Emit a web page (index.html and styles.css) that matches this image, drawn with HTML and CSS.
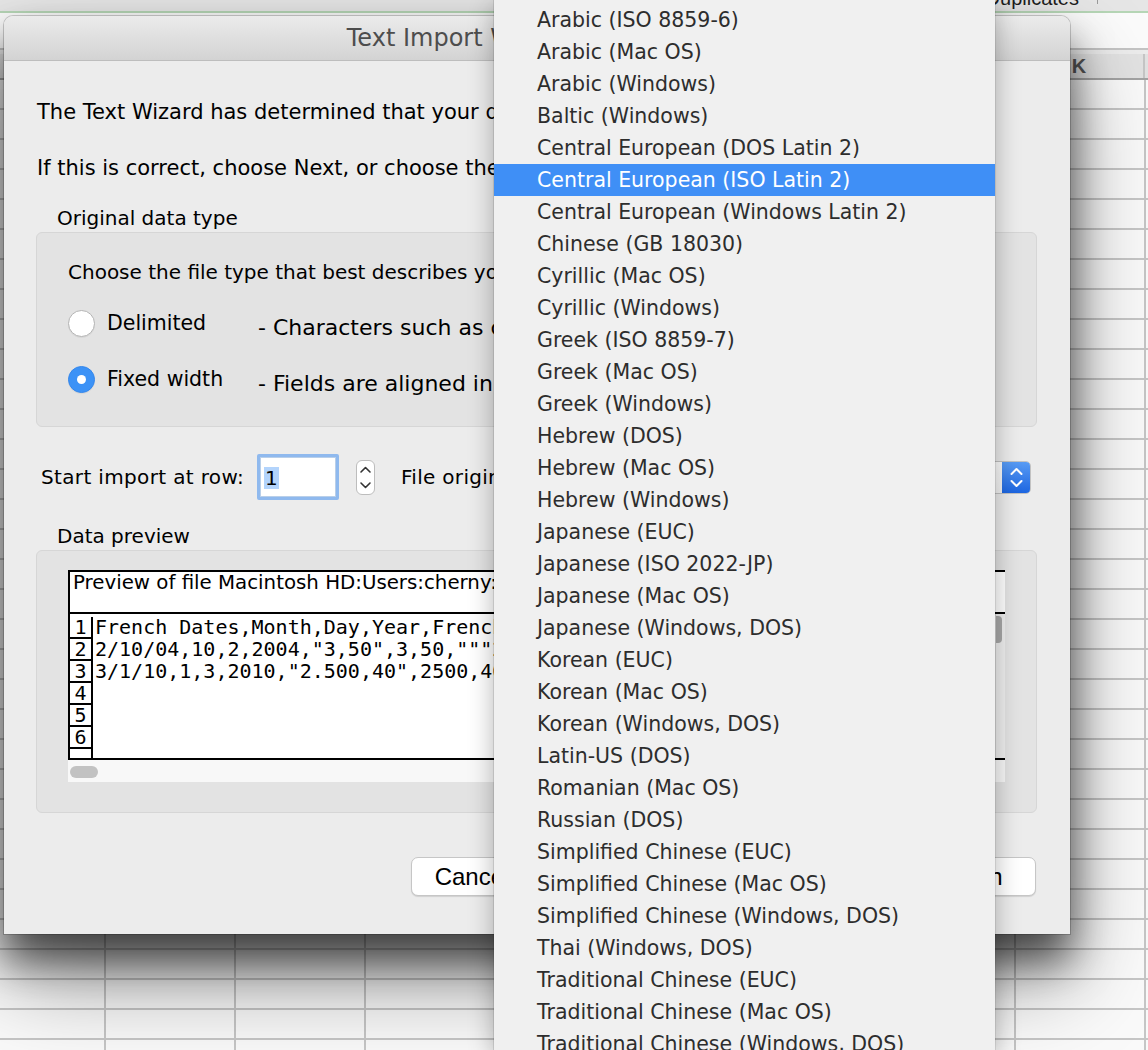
FILE: index.html
```html
<!DOCTYPE html>
<html>
<head>
<meta charset="utf-8">
<title>Text Import Wizard</title>
<link rel="stylesheet" href="styles.css">
</head>
<body>
<div class="sheet">
  <div class="toolbar"><span class="tb-text">Remove Duplicates</span><span class="tb-sep"></span></div>
  <div class="greenline"></div>
  <div class="formula"></div>
  <div class="colheads">
    <div class="colhead">C</div><div class="colhead">D</div><div class="colhead">E</div><div class="colhead">F</div><div class="colhead">G</div><div class="colhead">H</div><div class="colhead">I</div><div class="colhead">J</div><div class="colhead">K</div><div class="colhead">L</div>
  </div>
  <div class="grid"></div>
</div>

<div class="dialog">
  <div class="titlebar">Text Import Wizard - Step 1 of 3</div>
  <div class="dbody">
    <p class="intro1">The Text Wizard has determined that your data is Fixed Width.</p>
    <p class="intro2">If this is correct, choose Next, or choose the Data Type that best describes your data.</p>
    <div class="section-label">Original data type</div>
    <div class="group group-type">
      <div class="choose">Choose the file type that best describes your data:</div>
      <div class="radio-row first">
        <span class="radio"></span>
        <span class="radio-label">Delimited</span>
        <span class="radio-desc">- Characters such as commas or tabs separate each field.</span>
      </div>
      <div class="radio-row second">
        <span class="radio on"></span>
        <span class="radio-label">Fixed width</span>
        <span class="radio-desc">- Fields are aligned in columns with spaces between each field.</span>
      </div>
    </div>
    <div class="start-row">
      <span class="start-label">Start import at row:</span>
      <span class="num-field"><span class="num-sel">1</span></span>
      <span class="stepper">
        <svg width="19" height="35" viewBox="0 0 19 35"><path d="M5 12 L9.5 7.5 L14 12" fill="none" stroke="#333" stroke-width="1.6" stroke-linecap="round" stroke-linejoin="round"/><path d="M5 23 L9.5 27.5 L14 23" fill="none" stroke="#333" stroke-width="1.6" stroke-linecap="round" stroke-linejoin="round"/></svg>
      </span>
      <span class="origin-label">File origin:</span>
      <span class="popup">
        <span class="popup-text">Central European (ISO Latin 2)</span>
        <span class="popup-cap">
          <svg width="29" height="33" viewBox="0 0 29 33"><path d="M9.5 13 L14.5 8 L19.5 13" fill="none" stroke="#fff" stroke-width="2" stroke-linecap="round" stroke-linejoin="round"/><path d="M9.5 20 L14.5 25 L19.5 20" fill="none" stroke="#fff" stroke-width="2" stroke-linecap="round" stroke-linejoin="round"/></svg>
        </span>
      </span>
    </div>
    <div class="section-label preview-label">Data preview</div>
    <div class="group group-preview">
      <div class="preview">
        <div class="pv-main">
          <div class="pv-head">Preview of file Macintosh HD:Users:cherny:Desktop:French Dates.csv.</div>
          <div class="pv-body">
            <div class="pv-rows">
              <div class="pv-row"><span class="pv-num">1</span><span class="pv-text">French Dates,Month,Day,Year,French Numbers,Number,Text,Currency</span></div>
              <div class="pv-row"><span class="pv-num">2</span><span class="pv-text">2/10/04,10,2,2004,"3,50",3,50,"""2004""",€3,50</span></div>
              <div class="pv-row"><span class="pv-num">3</span><span class="pv-text">3/1/10,1,3,2010,"2.500,40",2500,40,"""2010""",€2.500,40</span></div>
              <div class="pv-row"><span class="pv-num">4</span><span class="pv-text"></span></div>
              <div class="pv-row"><span class="pv-num">5</span><span class="pv-text"></span></div>
              <div class="pv-row"><span class="pv-num">6</span><span class="pv-text"></span></div>
              <div class="pv-row"><span class="pv-num"></span><span class="pv-text"></span></div>
            </div>
            <div class="pv-vscroll"><span class="pv-vthumb"></span></div>
          </div>
        </div>
        <div class="pv-hscroll"><span class="pv-hthumb"></span></div>
      </div>
    </div>
    <div class="buttons">
      <button class="btn btn-cancel">Cancel</button>
      <button class="btn btn-mid">&lt; Back</button>
      <button class="btn btn-mid">Next &gt;</button>
      <button class="btn btn-finish">Finish</button>
    </div>
  </div>
</div>

<div class="menu">
  <div class="menu-item">Arabic (ISO 8859-6)</div>
  <div class="menu-item">Arabic (Mac OS)</div>
  <div class="menu-item">Arabic (Windows)</div>
  <div class="menu-item">Baltic (Windows)</div>
  <div class="menu-item">Central European (DOS Latin 2)</div>
  <div class="menu-item selected">Central European (ISO Latin 2)</div>
  <div class="menu-item">Central European (Windows Latin 2)</div>
  <div class="menu-item">Chinese (GB 18030)</div>
  <div class="menu-item">Cyrillic (Mac OS)</div>
  <div class="menu-item">Cyrillic (Windows)</div>
  <div class="menu-item">Greek (ISO 8859-7)</div>
  <div class="menu-item">Greek (Mac OS)</div>
  <div class="menu-item">Greek (Windows)</div>
  <div class="menu-item">Hebrew (DOS)</div>
  <div class="menu-item">Hebrew (Mac OS)</div>
  <div class="menu-item">Hebrew (Windows)</div>
  <div class="menu-item">Japanese (EUC)</div>
  <div class="menu-item">Japanese (ISO 2022-JP)</div>
  <div class="menu-item">Japanese (Mac OS)</div>
  <div class="menu-item">Japanese (Windows, DOS)</div>
  <div class="menu-item">Korean (EUC)</div>
  <div class="menu-item">Korean (Mac OS)</div>
  <div class="menu-item">Korean (Windows, DOS)</div>
  <div class="menu-item">Latin-US (DOS)</div>
  <div class="menu-item">Romanian (Mac OS)</div>
  <div class="menu-item">Russian (DOS)</div>
  <div class="menu-item">Simplified Chinese (EUC)</div>
  <div class="menu-item">Simplified Chinese (Mac OS)</div>
  <div class="menu-item">Simplified Chinese (Windows, DOS)</div>
  <div class="menu-item">Thai (Windows, DOS)</div>
  <div class="menu-item">Traditional Chinese (EUC)</div>
  <div class="menu-item">Traditional Chinese (Mac OS)</div>
  <div class="menu-item">Traditional Chinese (Windows, DOS)</div>
</div>
</body>
</html>
```

FILE: styles.css
```css
html, body {
  margin: 0;
  padding: 0;
}
body {
  width: 1148px;
  height: 1050px;
  overflow: hidden;
  position: relative;
  background: #fff;
  font-family: "DejaVu Sans", sans-serif;
}

/* ---------- spreadsheet background ---------- */
.sheet {
  display: flex;
  flex-direction: column;
  height: 1050px;
  overflow: hidden;
}
.toolbar {
  height: 11px;
  background: #e6e6e6;
  display: flex;
  justify-content: flex-end;
  align-items: flex-start;
  overflow: hidden;
}
.tb-text {
  font: 20px/24px "Liberation Sans", Arial, sans-serif;
  color: #1e1e1e;
  margin-top: -14px;
}
.tb-sep {
  width: 1px;
  height: 4px;
  background: #9a9a9a;
  margin-left: 18px;
  margin-right: 50px;
}
.greenline {
  height: 2px;
  background: #b6d6b6;
}
.formula {
  height: 35px;
  background: #fbfbfb;
}
.colheads {
  height: 32px;
  box-sizing: border-box;
  border-top: 2px solid #c4c4c4;
  border-bottom: 2px solid #a3a3a3;
  padding-top: 4px;
  background: linear-gradient(#ececec 0, #ececec 4px, #e2e2e2 4px);
  display: flex;
  margin-left: -25px;
}
.colhead {
  flex: 0 0 130px;
  box-sizing: border-box;
  border-right: 2px solid #c6c6c6;
  text-align: center;
  font: bold 20px/24px "Liberation Sans", Arial, sans-serif;
  color: #555;
}
.grid {
  flex: 1;
  background-color: #fafafa;
  background-image:
    linear-gradient(to right, #c6c6c6 0, #c6c6c6 2px, transparent 2px),
    linear-gradient(to bottom, transparent 28px, #c6c6c6 28px, #c6c6c6 30px);
  background-size: 130px 30px, 130px 30px;
  background-position: 104px 0, 0 0;
}

/* ---------- dialog ---------- */
.dialog {
  position: absolute;
  left: 4px;
  top: 16px;
  width: 1066px;
  height: 918px;
  background: #ececec;
  border-radius: 9px 9px 0 0;
  box-shadow: 0 26px 40px rgba(0, 0, 0, 0.6), 0 46px 90px rgba(0, 0, 0, 0.4), 0 0 0 1px rgba(0, 0, 0, 0.18);
  display: flex;
  flex-direction: column;
}
.titlebar {
  height: 44px;
  flex: none;
  border-bottom: 1px solid #bdbdbd;
  border-radius: 9px 9px 0 0;
  background: linear-gradient(#ebebeb, #d3d3d3);
  display: flex;
  align-items: center;
  justify-content: center;
  font: 24px "DejaVu Sans", sans-serif;
  color: #4d4d4d;
}
.dbody {
  padding: 0 33px 0 32px;
  display: flex;
  flex-direction: column;
  font: 20px/24px "DejaVu Sans", sans-serif;
  color: #000;
}
.dbody p {
  margin: 0;
  white-space: nowrap;
  font-size: 21px;
}
.intro1 { margin: 39px 0 0 1px !important; }
.intro2 { margin: 32px 0 0 1px !important; }
.section-label {
  margin: 26px 0 0 21px;
}
.preview-label {
  margin-top: 24px;
}
.group {
  margin-top: 2px;
  background: #e3e3e3;
  border: 1px solid #d6d6d6;
  border-radius: 6px;
  box-sizing: border-box;
}
.group-type {
  height: 195px;
  padding: 27px 31px 0;
}
.choose {
  white-space: nowrap;
}
.radio-row {
  display: flex;
  align-items: flex-start;
  height: 28px;
  white-space: nowrap;
}
.radio-row.first { margin-top: 26px; }
.radio-row.second { margin-top: 28px; }
.radio {
  flex: 0 0 27px;
  height: 27px;
  box-sizing: border-box;
  border-radius: 50%;
  background: #fff;
  border: 1px solid #b4b4b4;
  box-shadow: 0 1px 0 rgba(0, 0, 0, 0.05);
}
.radio.on {
  background: #3c92f6;
  border-color: #3487ec;
  display: flex;
  align-items: center;
  justify-content: center;
}
.radio.on::after {
  content: "";
  width: 9px;
  height: 9px;
  border-radius: 50%;
  background: #fff;
}
.radio-label {
  margin-left: 12px;
  flex: 0 0 151px;
  line-height: 26px;
  font-size: 20.5px;
}
.radio-desc {
  padding-top: 4px;
  line-height: 27px;
  font-size: 22px;
}

/* start import row */
.start-row {
  margin-top: 27px;
  height: 46px;
  display: flex;
  align-items: center;
  white-space: nowrap;
}
.start-label {
  margin-left: 5px;
  flex: 0 0 216px;
  letter-spacing: 0.35px;
}
.num-field {
  flex: 0 0 82px;
  height: 46px;
  box-sizing: border-box;
  border: 3px solid #8fb9ee;
  border-radius: 2px;
  background: #fff;
  box-shadow: inset 0 0 0 1px #b9cfe9;
  padding: 9px 0 0 4px;
}
.num-sel {
  display: inline-block;
  background: #b3d4fc;
  line-height: 22px;
  height: 22px;
  padding: 0 1px;
}
.stepper {
  margin-left: 17px;
  flex: 0 0 19px;
  height: 35px;
  box-sizing: border-box;
  border: 1px solid #bdbdbd;
  border-radius: 6px;
  background: #fff;
  display: flex;
  align-items: center;
  justify-content: center;
  overflow: hidden;
}
.stepper svg { display: block; flex: none; }
.origin-label {
  margin-left: 26px;
  letter-spacing: 0.3px;
}
.popup {
  flex: 1;
  margin-left: 12px;
  margin-right: 6px;
  height: 33px;
  box-sizing: border-box;
  border: 1px solid #c2c2c2;
  border-radius: 5px;
  background: linear-gradient(#fdfdfd, #f3f3f3);
  display: flex;
  overflow: hidden;
}
.popup-text {
  flex: 1;
  padding-left: 10px;
  font: 18px/31px "DejaVu Sans", sans-serif;
  color: #000;
}
.popup-cap {
  flex: 0 0 29px;
  margin: -1px -1px -1px 0;
  border-radius: 0 5px 5px 0;
  background: linear-gradient(#5a9df5, #1b64e0);
  display: flex;
  align-items: center;
}
.popup-cap svg { display: block; }

/* data preview */
.group-preview {
  height: 263px;
  padding: 19px 31px 0;
}
.preview {
  height: 212px;
  background: #fff;
  display: flex;
  flex-direction: column;
}
.pv-main {
  height: 190px;
  flex: none;
  box-sizing: border-box;
  border-top: 2px solid #000;
  border-left: 2px solid #000;
  border-bottom: 2px solid #000;
  display: flex;
  flex-direction: column;
  overflow: hidden;
}
.pv-head {
  height: 42px;
  flex: none;
  box-sizing: border-box;
  border-bottom: 2px solid #000;
  padding-left: 3px;
  font: 19.8px/22px "DejaVu Sans", sans-serif;
  white-space: nowrap;
  overflow: hidden;
}
.pv-body {
  flex: 1;
  display: flex;
  overflow: hidden;
}
.pv-rows {
  flex: 1;
  padding-top: 3px;
  overflow: hidden;
}
.pv-row {
  display: flex;
  height: 22px;
}
.pv-num {
  flex: 0 0 21px;
  height: 20px;
  border-right: 2px solid #000;
  border-bottom: 2px solid #000;
  text-align: center;
  font: 20px/20px "DejaVu Sans Mono", monospace;
}
.pv-text {
  padding-left: 2px;
  font: 20px/20px "DejaVu Sans Mono", monospace;
  white-space: pre;
}
.pv-vscroll {
  flex: 0 0 9px;
  background: #efefef;
  border-left: 1px solid #e0e0e0;
  padding-top: 2px;
}
.pv-vthumb {
  display: block;
  width: 6px;
  height: 27px;
  border-radius: 0 4px 4px 0;
  background: #a8a8a8;
}
.pv-hscroll {
  flex: 1;
  background: #f8f8f8;
  padding: 6px 0 0 2px;
}
.pv-hthumb {
  display: block;
  width: 28px;
  height: 12px;
  border-radius: 6px;
  background: #c2c2c2;
}

/* buttons */
.buttons {
  margin-top: 44px;
  margin-right: 1px;
  height: 39px;
  display: flex;
  justify-content: flex-end;
}
.btn {
  height: 39px;
  box-sizing: border-box;
  border: 1px solid #c6c6c6;
  border-radius: 7px;
  background: #fff;
  box-shadow: 0 1px 1px rgba(0, 0, 0, 0.12);
  font: 24px "Liberation Sans", Arial, sans-serif;
  color: #000;
  padding: 0;
}
.btn-cancel { width: 122px; margin-right: 34px; }
.btn-mid { width: 157px; margin-right: 12px; }
.btn-finish { width: 131px; }

/* ---------- popup menu ---------- */
.menu {
  position: absolute;
  left: 494px;
  top: 0;
  width: 501px;
  height: 1050px;
  box-sizing: border-box;
  padding-top: 4px;
  background: #f0f0f0;
  box-shadow: -1px 0 0 rgba(0, 0, 0, 0.1), 1px 0 0 rgba(0, 0, 0, 0.08), 0 6px 24px rgba(0, 0, 0, 0.3);
  overflow: hidden;
}
.menu-item {
  height: 32px;
  padding-left: 43px;
  font: 20.5px/32px "DejaVu Sans", sans-serif;
  color: #2d2d2d;
  white-space: nowrap;
}
.menu-item.selected {
  background: #3f8ff6;
  color: #fff;
}
```
